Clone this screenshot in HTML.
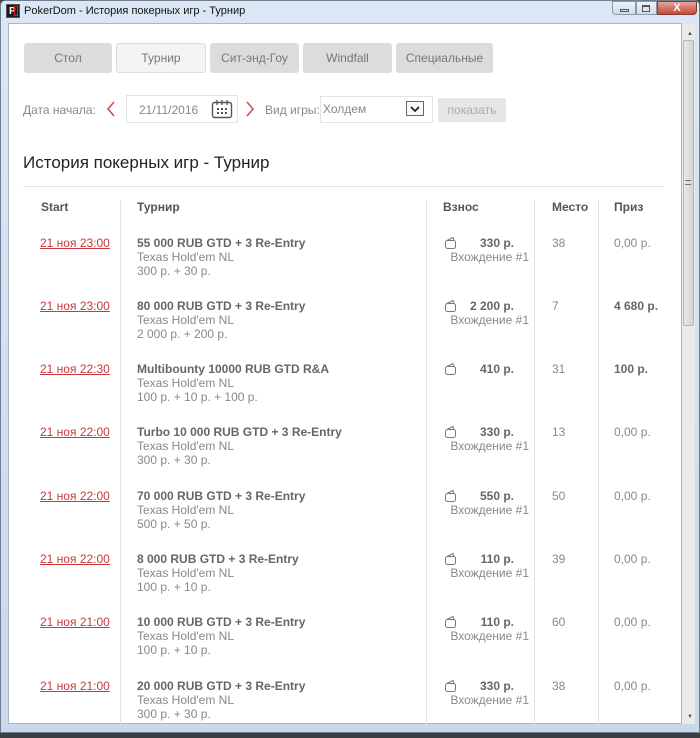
<!DOCTYPE html>
<html><head><meta charset="utf-8">
<style>
*{margin:0;padding:0;box-sizing:border-box}
body{width:700px;height:738px;overflow:hidden;background:#3a3f44;font-family:"Liberation Sans",sans-serif;position:relative}
.abs{position:absolute}
.win{left:0;top:0;width:700px;height:733px;background:linear-gradient(#dbe7f4,#c9d9ea);border:1px solid #6f7f90;border-radius:5px 5px 0 0}
.content{left:8px;top:23px;width:674px;height:701px;background:#fff;border:1px solid #a9b8c8;overflow:hidden}
.title{left:24px;top:5px;font-size:11px;color:#111}
.tab{position:absolute;top:43px;height:30px;background:#dcdcdc;border-radius:3px;color:#777;font-size:12px;text-align:center;line-height:30px}
.tab.act{background:#f3f3f3;border:1px solid #dcdcdc;line-height:28px}
.g{color:#888;font-size:12px}
.hd{font-weight:bold;color:#555;font-size:12px}
.vl{position:absolute;top:200px;width:1px;height:524px;background:#e3e3e3}
.date{position:absolute;left:40px;font-size:12px;color:#c8393b;text-decoration:underline}
.nm{position:absolute;left:137px;font-size:12px;line-height:14px;color:#888}
.nm b{color:#666}
.fee{position:absolute;left:442px;width:90px;font-size:12px;line-height:14px;color:#888}
.fee b{position:absolute;right:18px;top:0;color:#666}
.fee .e{position:absolute;right:3px;top:14px}
.pl{position:absolute;left:552px;font-size:12px;color:#888}
.pr{position:absolute;left:614px;font-size:12px;color:#888}
.pr b{color:#666}
</style></head><body>
<div class="abs win"></div>
<div class="abs" style="left:6px;top:4px;width:14px;height:14px;background:#1a1a1a;border:1px solid #555"><div style="position:absolute;left:2px;top:1px;font-size:10px;color:#fff;font-weight:bold;line-height:11px">P</div><div style="position:absolute;left:7px;top:1px;width:4px;height:10px;border:1px solid #d22"></div></div>
<div class="abs title">PokerDom - История покерных игр - Турнир</div>
<div class="abs" style="left:612px;top:1px;width:24px;height:14px;border:1px solid #8a9bb0;border-radius:0 0 0 4px;background:linear-gradient(#eef3f9,#cfdbe9)"><div style="position:absolute;left:7px;top:7px;width:9px;height:3px;border:1px solid #555"></div></div>
<div class="abs" style="left:636px;top:1px;width:21px;height:14px;border:1px solid #8a9bb0;background:linear-gradient(#eef3f9,#cfdbe9)"><div style="position:absolute;left:5px;top:3px;width:8px;height:7px;border:1px solid #555;border-top-width:2px"></div></div>
<div class="abs" style="left:657px;top:1px;width:40px;height:14px;border:1px solid #8a3b30;border-radius:0 0 4px 0;background:linear-gradient(#e8a397,#c3493a);color:#fff;font-size:11px;font-weight:bold;text-align:center;line-height:12px">X</div>
<div class="abs content"></div>
<div class="abs" style="left:682px;top:24px;width:13px;height:700px;background:#eaeaea"></div>
<div class="abs" style="left:687px;top:31px;font-size:6px;color:#555">▲</div>
<div class="abs" style="left:687px;top:714px;font-size:6px;color:#555">▼</div>
<div class="abs" style="left:683px;top:40px;width:11px;height:286px;background:linear-gradient(90deg,#e9e9e9,#d3d3d3);border:1px solid #b4b4b4;border-radius:2px"></div>
<div class="abs" style="left:685px;top:180px;width:6px;height:5px;border-top:1px solid #777;border-bottom:1px solid #777"></div>

<div class="tab" style="left:24px;width:88px">Стол</div>
<div class="tab act" style="left:116px;width:90px">Турнир</div>
<div class="tab" style="left:210px;width:89px">Сит-энд-Гоу</div>
<div class="tab" style="left:303px;width:89px">Windfall</div>
<div class="tab" style="left:396px;width:97px">Специальные</div>

<div class="abs g" style="left:23px;top:103px;font-size:12px">Дата начала:</div>
<svg class="abs" style="left:105px;top:100px" width="12" height="18"><path d="M9 2L3 9L9 16" stroke="#d05050" stroke-width="1.6" fill="none"/></svg>
<div class="abs" style="left:126px;top:95px;width:112px;height:28px;border:1px solid #e4e4e4"></div>
<div class="abs g" style="left:139px;top:103px">21/11/2016</div>
<svg class="abs" style="left:211px;top:99px" width="22" height="20"><rect x="1.5" y="3.5" width="19" height="15" rx="2" fill="none" stroke="#555" stroke-width="1.4"/><path d="M6 1v5M11 1v5M16 1v5" stroke="#555" stroke-width="1.3"/><g fill="#555"><rect x="6" y="9" width="2" height="2"/><rect x="10" y="9" width="2" height="2"/><rect x="14" y="9" width="2" height="2"/><rect x="6" y="13" width="2" height="2"/><rect x="10" y="13" width="2" height="2"/><rect x="14" y="13" width="2" height="2"/></g></svg>
<svg class="abs" style="left:244px;top:100px" width="12" height="18"><path d="M3 2L9 9L3 16" stroke="#d05050" stroke-width="1.6" fill="none"/></svg>
<div class="abs g" style="left:265px;top:103px">Вид игры:</div>
<div class="abs" style="left:320px;top:96px;width:113px;height:27px;border:1px solid #e4e4e4"></div>
<div class="abs g" style="left:323px;top:102px">Холдем</div>
<div class="abs" style="left:406px;top:101px;width:18px;height:15px;border:1px solid #666;background:#fafafa"></div>
<svg class="abs" style="left:410px;top:105px" width="10" height="8"><path d="M1 2L5 6L9 2" stroke="#222" stroke-width="1.8" fill="none"/></svg>
<div class="abs" style="left:438px;top:98px;width:68px;height:24px;background:#e6e6e6;border-radius:2px;color:#aaa;font-size:12px;text-align:center;line-height:24px">показать</div>

<div class="abs" style="left:23px;top:153px;font-size:17px;color:#222">История покерных игр - Турнир</div>
<div class="abs" style="left:23px;top:186px;width:641px;height:1px;background:#e2e2e2"></div>

<div class="vl" style="left:120px"></div>
<div class="vl" style="left:426px"></div>
<div class="vl" style="left:534px"></div>
<div class="vl" style="left:598px"></div>
<div class="abs hd" style="left:41px;top:200px">Start</div>
<div class="abs hd" style="left:137px;top:200px">Турнир</div>
<div class="abs hd" style="left:443px;top:200px">Взнос</div>
<div class="abs hd" style="left:552px;top:200px">Место</div>
<div class="abs hd" style="left:614px;top:200px">Приз</div>

<div id="rows"></div>
<script>
var R=[
["21 ноя 23:00","55 000 RUB GTD + 3 Re-Entry","300 р. + 30 р.","330 р.",1,"38","0,00 р.",0],
["21 ноя 23:00","80 000 RUB GTD + 3 Re-Entry","2 000 р. + 200 р.","2 200 р.",1,"7","4 680 р.",1],
["21 ноя 22:30","Multibounty 10000 RUB GTD R&A","100 р. + 10 р. + 100 р.","410 р.",0,"31","100 р.",1],
["21 ноя 22:00","Turbo 10 000 RUB GTD + 3 Re-Entry","300 р. + 30 р.","330 р.",1,"13","0,00 р.",0],
["21 ноя 22:00","70 000 RUB GTD + 3 Re-Entry","500 р. + 50 р.","550 р.",1,"50","0,00 р.",0],
["21 ноя 22:00","8 000 RUB GTD + 3 Re-Entry","100 р. + 10 р.","110 р.",1,"39","0,00 р.",0],
["21 ноя 21:00","10 000 RUB GTD + 3 Re-Entry","100 р. + 10 р.","110 р.",1,"60","0,00 р.",0],
["21 ноя 21:00","20 000 RUB GTD + 3 Re-Entry","300 р. + 30 р.","330 р.",1,"38","0,00 р.",0]];
var tops=[236,299,362,425,489,552,615,679],h='';
R.forEach(function(r,i){var t=tops[i];
h+='<div class="date" style="top:'+t+'px">'+r[0]+'</div>';
h+='<div class="nm" style="top:'+t+'px"><b>'+r[1]+'</b><br>Texas Hold\'em NL<br>'+r[2]+'</div>';
h+='<div class="fee" style="top:'+t+'px;height:30px"><svg style="position:absolute;left:2px;top:0" width="14" height="14"><rect x="1.5" y="4.5" width="10" height="8" rx="2" fill="none" stroke="#777" stroke-width="1"/><path d="M3 4.5L9 1.5L10 4.5" fill="none" stroke="#777" stroke-width="1"/></svg><b>'+r[3]+'</b>'+(r[4]?'<span class="e">Вхождение #1</span>':'')+'</div>';
h+='<div class="pl" style="top:'+t+'px">'+r[5]+'</div>';
h+='<div class="pr" style="top:'+t+'px">'+(r[7]?'<b>'+r[6]+'</b>':r[6])+'</div>';});
document.getElementById('rows').innerHTML=h;
</script>
</body></html>
